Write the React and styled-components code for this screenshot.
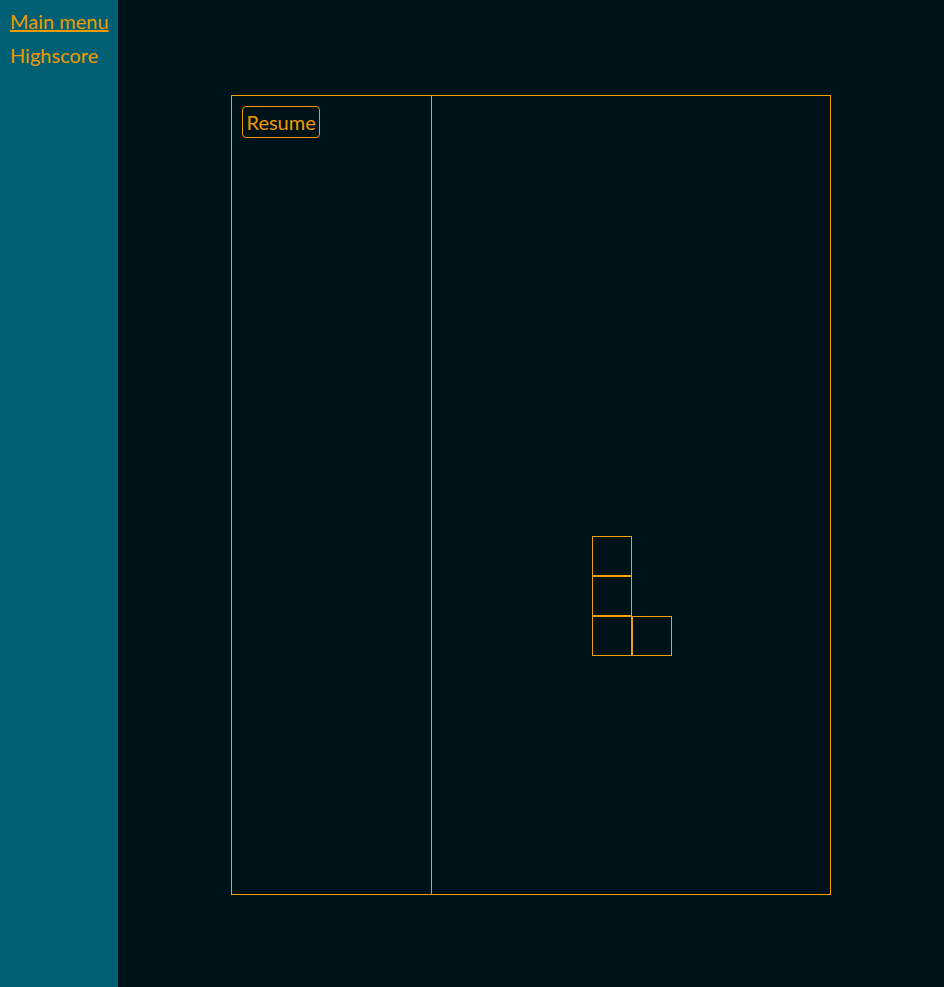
import React from "react";
import styled, { createGlobalStyle } from "styled-components";

const GlobalStyle = createGlobalStyle`
  html, body { margin: 0; padding: 0; background: #001219; }
  body { font-family: Lato, "Noto Sans", sans-serif; }
  * { box-sizing: border-box; }
`;

const ORANGE = "#ee9b00";
const LINE = "#f5a000";

const Layout = styled.div`
  display: flex;
  min-height: 987px;
`;

const Sidebar = styled.nav`
  width: 118px;
  flex-shrink: 0;
  background: #005f73;
  padding: 4px 10px;
  display: flex;
  flex-direction: column;
`;

const NavItem = styled.a`
  font-family: Lato, sans-serif;
  font-size: 20px;
  line-height: 34px;
  color: ${ORANGE};
  text-decoration: ${(p) => (p.$active ? "underline" : "none")};
  cursor: pointer;
  white-space: nowrap;
`;

const Main = styled.main`
  flex: 1;
  background: #001219;
  display: flex;
  justify-content: center;
  align-items: flex-start;
  padding-top: 95px;
`;

const Board = styled.div`
  width: 600px;
  height: 800px;
  border: 1px solid ${LINE};
  display: flex;
`;

const SidePanel = styled.div`
  width: 200px;
  flex-shrink: 0;
  border-right: 1px solid ${LINE};
  padding: 10px;
`;

const Button = styled.button`
  height: 32px;
  padding: 0 3.5px;
  background: transparent;
  border: 1px solid ${ORANGE};
  border-radius: 4px;
  color: ${ORANGE};
  font-family: Lato, sans-serif;
  font-size: 20px;
  line-height: 30px;
  cursor: pointer;
`;

const Playfield = styled.div`
  flex: 1;
  overflow: hidden;
  display: grid;
  grid-template-columns: repeat(10, 40px);
  grid-template-rows: repeat(20, 40px);
`;

const Block = styled.div`
  grid-column: ${(p) => p.$col};
  grid-row: ${(p) => p.$row};
  border: 1px solid ${LINE};
`;

const piece = [
  { col: 5, row: 12 },
  { col: 5, row: 13 },
  { col: 5, row: 14 },
  { col: 6, row: 14 },
];

export default function App() {
  return (
    <>
      <GlobalStyle />
      <Layout>
        <Sidebar>
          <NavItem $active>Main menu</NavItem>
          <NavItem>Highscore</NavItem>
        </Sidebar>
        <Main>
          <Board>
            <SidePanel>
              <Button>Resume</Button>
            </SidePanel>
            <Playfield>
              {piece.map((b, i) => (
                <Block key={i} $col={b.col} $row={b.row} />
              ))}
            </Playfield>
          </Board>
        </Main>
      </Layout>
    </>
  );
}
